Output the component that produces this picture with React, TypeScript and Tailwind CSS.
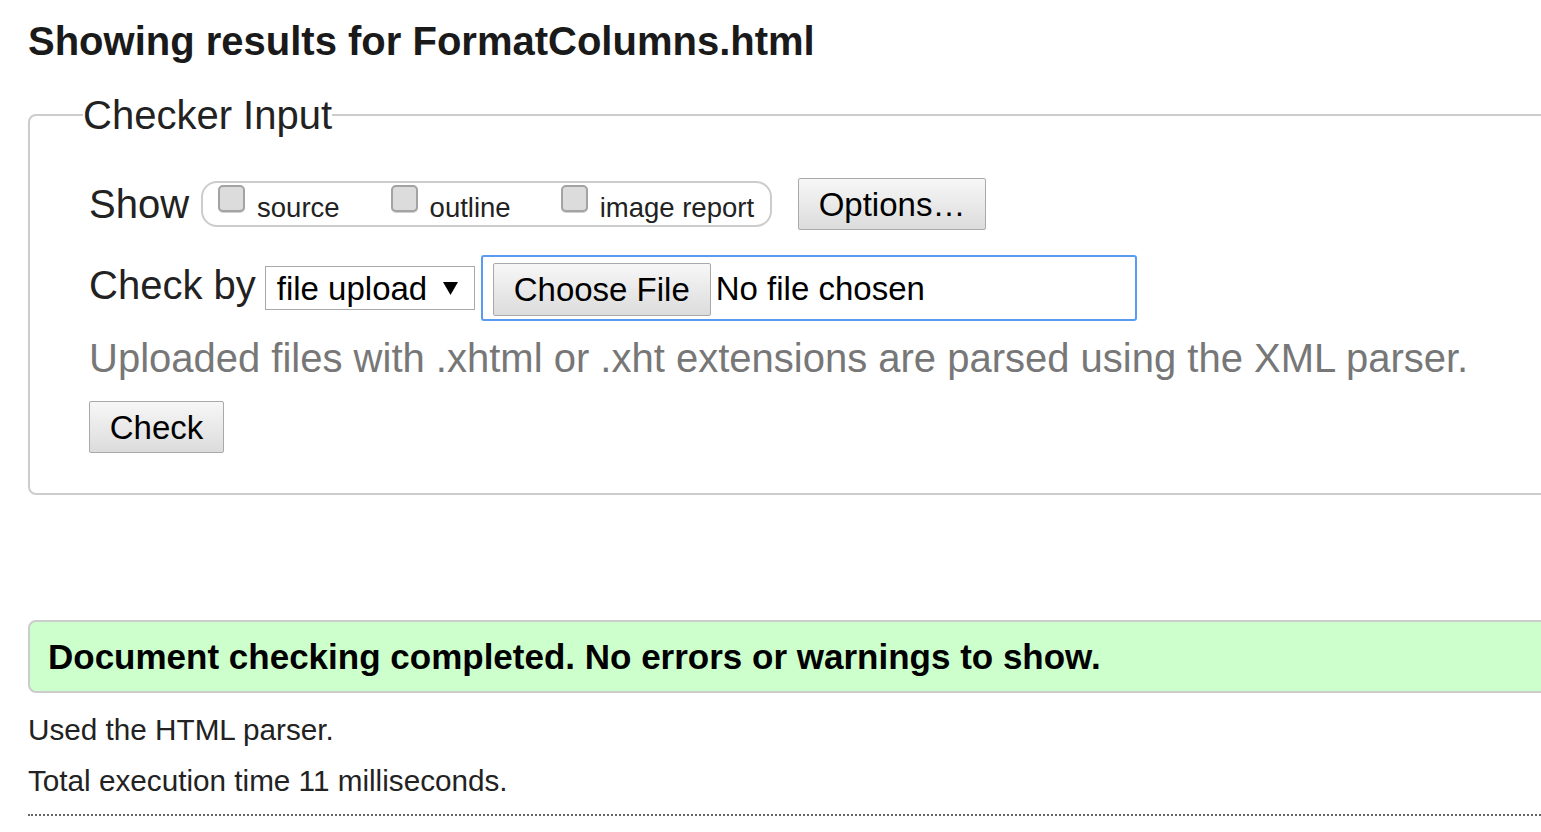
import React from 'react';

const buttonClass =
  'h-[52px] px-[19px] border border-[#a9a9a9] rounded-[2px] bg-linear-to-b from-[#f7f7f7] to-[#dcdcdc] text-[33px] leading-none text-black whitespace-nowrap shrink-0';

// fake native checkbox, sits a bit above the label like Chrome draws it zoomed
const CheckBox = ({ className = '' }: { className?: string }) => (
  <span
    className={`w-[27px] h-[27px] mb-[12px] shrink-0 rounded-[5px] border-2 border-[#a3a3a3] bg-[#dcdcdc] shadow-[0_1px_0_#d0d0d0] ${className}`}
  />
);

const ShowOptions: React.FC = () => {
  return (
    <div className="ml-[12px] h-[46px] flex items-center border-2 border-[#cccccc] rounded-[16px] pl-[15px] pr-[16px]">
      <CheckBox />
      <span className="ml-[12px] mt-[6px] text-[27.5px] leading-[31px] whitespace-nowrap">source</span>
      <CheckBox className="ml-[51px]" />
      <span className="ml-[12px] mt-[6px] text-[27.5px] leading-[31px] whitespace-nowrap">outline</span>
      <CheckBox className="ml-[50px]" />
      <span className="ml-[12px] mt-[6px] text-[27.5px] leading-[31px] whitespace-nowrap">image report</span>
    </div>
  );
};

export default function App() {
  return (
    <div className="w-full min-h-screen overflow-hidden bg-white font-['Liberation_Sans',Arial,sans-serif] text-[#222]">
      <div className="w-[1700px] pl-[28px] pt-[17px]">
        <h2 className="text-[40px] leading-[48px] font-bold text-[#1a1a1a]">
          Showing results for FormatColumns.html
        </h2>

        <fieldset className="mt-[26px] border-2 border-[#cccccc] rounded-[8px] pl-[53px] pt-[39px] pb-[40px]">
          <legend className="text-[40px] leading-[48px] px-0">Checker Input</legend>

          <div className="pl-[6px]">
            <div className="h-[52px] flex items-center">
              <span className="text-[40px] leading-[48px]">Show</span>
              <ShowOptions />
              <button className={`${buttonClass} ml-[26px] w-[188px]`}>Options…</button>
            </div>

            <div className="mt-[25px] h-[66px] flex items-center">
              <span className="text-[40px] leading-[48px] mb-[6px] whitespace-nowrap">Check by</span>
              <div className="ml-[9px] h-[44px] w-[210px] flex items-center justify-between border border-[#a9a9a9] bg-white pl-[11px] pr-[16px]">
                <span className="text-[33px] leading-none text-black whitespace-nowrap">file upload</span>
                <svg width="15" height="13" viewBox="0 0 15 13">
                  <polygon points="0,0 15,0 7.5,13" fill="#000" />
                </svg>
              </div>
              <div className="ml-[6px] h-[66px] w-[656px] flex items-center border-2 border-[#5a9bf2] rounded-[3px] pl-[10px]">
                <button className={`${buttonClass} h-[53px] mt-[3px] w-[218px]`}>Choose File</button>
                <span className="ml-[5px] text-[33px] leading-none text-black whitespace-nowrap">No file chosen</span>
              </div>
            </div>

            <p className="mt-[13px] text-[40px] leading-[48px] text-[#777777]">
              Uploaded files with .xhtml or .xht extensions are parsed using the XML parser.
            </p>

            <button className={`${buttonClass} mt-[19px] w-[135px]`}>Check</button>
          </div>
        </fieldset>

        <div className="mt-[125px] h-[73px] flex items-center border-2 border-[#cccccc] rounded-[8px] bg-[#ccffcc] pl-[18px]">
          <p className="text-[35px] leading-[42px] font-bold text-black">
            Document checking completed. No errors or warnings to show.
          </p>
        </div>

        <p className="mt-[19px] text-[29.7px] leading-[36px]">Used the HTML parser.</p>
        <p className="mt-[15px] text-[29.7px] leading-[36px]">Total execution time 11 milliseconds.</p>

        <div className="mt-[15px] border-t-2 border-dotted border-[#666666]" />
      </div>
    </div>
  );
}
